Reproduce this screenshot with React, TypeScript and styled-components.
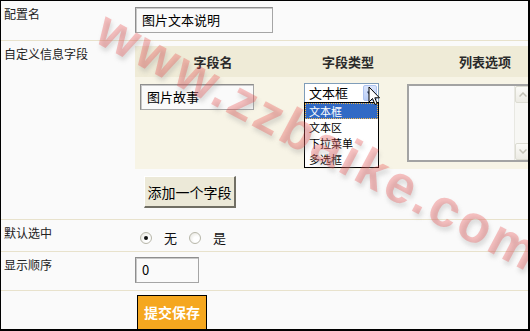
import React from "react";
import styled, { createGlobalStyle } from "styled-components";

const GlobalStyle = createGlobalStyle`
  html, body {
    margin: 0;
    padding: 0;
    background: #ffffff;
  }
  body {
    font-family: "Noto Sans CJK SC", "DejaVu Sans", sans-serif;
  }
  * {
    box-sizing: border-box;
  }
`;

const Frame = styled.div`
  position: relative;
  width: 530px;
  height: 331px;
  overflow: hidden;
  background: #fafafa;
  border-top: 1px solid #000;
  border-left: 1px solid #000;
  border-right: 2px solid #000;
  border-bottom: 2px solid #000;
  display: flex;
  flex-direction: column;
`;

const Row = styled.div<{ $height: number; $last?: boolean }>`
  display: flex;
  flex-direction: row;
  height: ${(p) => p.$height}px;
  flex-shrink: 0;
  border-bottom: ${(p) => (p.$last ? "none" : "1px solid #e8e2cc")};
`;

const Label = styled.div`
  width: 134px;
  flex-shrink: 0;
  padding: 5px 0 0 3px;
  font-size: 12px;
  line-height: 16px;
  color: #222;
`;

const Value = styled.div<{ $pt: number }>`
  flex: 1;
  min-width: 0;
  overflow: hidden;
  padding-top: ${(p) => p.$pt}px;
  display: flex;
  flex-direction: column;
  align-items: flex-start;
`;

const TextInput = styled.div<{ $width: number }>`
  width: ${(p) => p.$width}px;
  height: 26px;
  background: #fafafa;
  border: 1px solid #a5a5a5;
  border-top-color: #8e8e8e;
  border-left-color: #8e8e8e;
  box-shadow: inset 1px 1px 0 #c8c8c8;
  padding: 0 6px;
  font-size: 13px;
  line-height: 24px;
  color: #000;
  white-space: nowrap;
`;

const FieldTable = styled.div`
  width: 430px;
  display: grid;
  grid-template-columns: 156px 114px 160px;
`;

const HeadCell = styled.div`
  height: 31px;
  background: #efebd7;
  display: flex;
  align-items: center;
  justify-content: center;
  font-size: 13px;
  font-weight: bold;
  color: #2a2a2a;
`;

const BodyCell = styled.div<{ $pl: number; $pt: number }>`
  position: relative;
  height: 92px;
  background: #f7f4e6;
  padding-left: ${(p) => p.$pl}px;
  padding-top: ${(p) => p.$pt}px;
`;

const Select = styled.div`
  position: relative;
  width: 75px;
  height: 20px;
  background: #fff;
  border: 1px solid #7f9db9;
  display: flex;
  align-items: center;
  padding-left: 4px;
  font-size: 13px;
  line-height: 18px;
`;

const SelectArrow = styled.div`
  position: absolute;
  right: 1px;
  top: 1px;
  width: 14px;
  height: 16px;
  border-radius: 2px;
  background: linear-gradient(180deg, #dbe5fb 0%, #b9cdf7 100%);
  border: 1px solid #aec3ef;
  display: flex;
  align-items: center;
  justify-content: center;
`;

const DropList = styled.div`
  position: absolute;
  left: 13px;
  top: 25px;
  width: 75px;
  background: #fff;
  border: 1px solid #000;
  z-index: 2;
`;

const DropItem = styled.div<{ $active?: boolean }>`
  height: 16px;
  line-height: 16px;
  padding-left: 4px;
  font-size: 11px;
  white-space: nowrap;
  color: ${(p) => (p.$active ? "#fff" : "#000")};
  background: ${(p) => (p.$active ? "#316ac5" : "#fff")};
  outline: ${(p) => (p.$active ? "1px dotted #f2b84b" : "none")};
  outline-offset: -1px;
`;

const TextArea = styled.div`
  width: 124px;
  height: 78px;
  background: #fafafa;
  border: 2px solid #a3a3a3;
  border-right: none;
  display: flex;
  justify-content: flex-end;
`;

const ScrollTrack = styled.div`
  width: 17px;
  height: 100%;
  background: #f7f7f4;
  border-left: 1px solid #e8e8e2;
  display: flex;
  flex-direction: column;
  justify-content: space-between;
`;

const ScrollButton = styled.div`
  width: 16px;
  height: 17px;
  border: 1px solid #dcdcd2;
  border-radius: 2px;
  background: linear-gradient(180deg, #fbfbf8 0%, #ecebe4 100%);
  display: flex;
  align-items: center;
  justify-content: center;
`;

const AddButton = styled.div`
  margin: 7px 0 0 9px;
  width: 92px;
  height: 32px;
  background: #ece9d8;
  border-top: 1px solid #ffffff;
  border-left: 1px solid #ffffff;
  border-right: 2px solid #716f64;
  border-bottom: 2px solid #716f64;
  display: flex;
  align-items: center;
  justify-content: center;
  font-size: 14px;
  color: #000;
`;

const RadioGroup = styled.div`
  display: flex;
  align-items: center;
  margin: 6px 0 0 5px;
  font-size: 13px;
  color: #111;
`;

const Radio = styled.span<{ $checked?: boolean }>`
  position: relative;
  display: inline-block;
  width: 12px;
  height: 12px;
  border-radius: 50%;
  border: 1px solid #b8b7aa;
  background: radial-gradient(circle at 65% 65%, #ffffff 30%, #e2e1d9 100%);
  margin-right: 12px;

  &::after {
    content: "";
    display: ${(p) => (p.$checked ? "block" : "none")};
    position: absolute;
    left: 3px;
    top: 3px;
    width: 4px;
    height: 4px;
    border-radius: 50%;
    background: #111;
  }
`;

const RadioText = styled.span`
  margin-right: 12px;
  line-height: 14px;
`;

const SubmitButton = styled.div`
  margin-left: 2px;
  width: 70px;
  height: 36px;
  background: #f5a71f;
  border: 1px solid #000;
  display: flex;
  align-items: flex-start;
  justify-content: center;
  padding-top: 6px;
  font-size: 14px;
  font-weight: bold;
  color: #fff;
`;

const Watermark = styled.div`
  position: absolute;
  left: 318px;
  top: 140px;
  width: max-content;
  transform: translate(-50%, -50%) rotate(28deg);
  font-family: "Liberation Sans", Arial, sans-serif;
  font-weight: bold;
  font-size: 53px;
  letter-spacing: 3px;
  line-height: 40px;
  color: rgba(236, 70, 70, 0.32);
  text-shadow: 3px 3px 4px rgba(150, 150, 150, 0.3);
  pointer-events: none;
  white-space: nowrap;
  z-index: 5;
`;

const Cursor = styled.svg`
  position: absolute;
  left: 367px;
  top: 85px;
  z-index: 6;
`;

export default function App() {
  return (
    <>
      <GlobalStyle />
      <Frame>
        <Row $height={40}>
          <Label>配置名</Label>
          <Value $pt={6}>
            <TextInput $width={138}>图片文本说明</TextInput>
          </Value>
        </Row>

        <Row $height={179}>
          <Label>自定义信息字段</Label>
          <Value $pt={5}>
            <FieldTable>
              <HeadCell>字段名</HeadCell>
              <HeadCell>字段类型</HeadCell>
              <HeadCell>列表选项</HeadCell>
              <BodyCell $pl={5} $pt={7}>
                <TextInput $width={114}>图片故事</TextInput>
              </BodyCell>
              <BodyCell $pl={13} $pt={6}>
                <Select>
                  文本框
                  <SelectArrow>
                    <svg width="7" height="5" viewBox="0 0 7 5">
                      <path d="M0.5 0.5 L3.5 3.8 L6.5 0.5" fill="none" stroke="#4d6185" strokeWidth="1.6" />
                    </svg>
                  </SelectArrow>
                </Select>
                <DropList>
                  <DropItem $active>文本框</DropItem>
                  <DropItem>文本区</DropItem>
                  <DropItem>下拉菜单</DropItem>
                  <DropItem>多选框</DropItem>
                </DropList>
              </BodyCell>
              <BodyCell $pl={2} $pt={7}>
                <TextArea>
                  <ScrollTrack>
                    <ScrollButton>
                      <svg width="8" height="5" viewBox="0 0 8 5">
                        <path d="M0.5 4.5 L4 1 L7.5 4.5" fill="none" stroke="#c2c1b6" strokeWidth="1.5" />
                      </svg>
                    </ScrollButton>
                    <ScrollButton>
                      <svg width="8" height="5" viewBox="0 0 8 5">
                        <path d="M0.5 0.5 L4 4 L7.5 0.5" fill="none" stroke="#c2c1b6" strokeWidth="1.5" />
                      </svg>
                    </ScrollButton>
                  </ScrollTrack>
                </TextArea>
              </BodyCell>
            </FieldTable>
            <AddButton>添加一个字段</AddButton>
          </Value>
        </Row>

        <Row $height={32}>
          <Label>默认选中</Label>
          <Value $pt={5}>
            <RadioGroup>
              <Radio $checked />
              <RadioText>无</RadioText>
              <Radio />
              <RadioText>是</RadioText>
            </RadioGroup>
          </Value>
        </Row>

        <Row $height={39}>
          <Label>显示顺序</Label>
          <Value $pt={5}>
            <TextInput $width={64}>0</TextInput>
          </Value>
        </Row>

        <Row $height={40} $last>
          <Label />
          <Value $pt={4}>
            <SubmitButton>提交保存</SubmitButton>
          </Value>
        </Row>

        <Watermark>www.zzbaike.com</Watermark>

        <Cursor width="13" height="21" viewBox="0 0 13 21">
          <path
            d="M1 1 L1 16 L4.5 12.5 L7 18.5 L9.2 17.5 L6.8 11.8 L11.5 11.8 Z"
            fill="#fff"
            stroke="#000"
            strokeWidth="1"
            strokeLinejoin="miter"
          />
        </Cursor>
      </Frame>
    </>
  );
}
